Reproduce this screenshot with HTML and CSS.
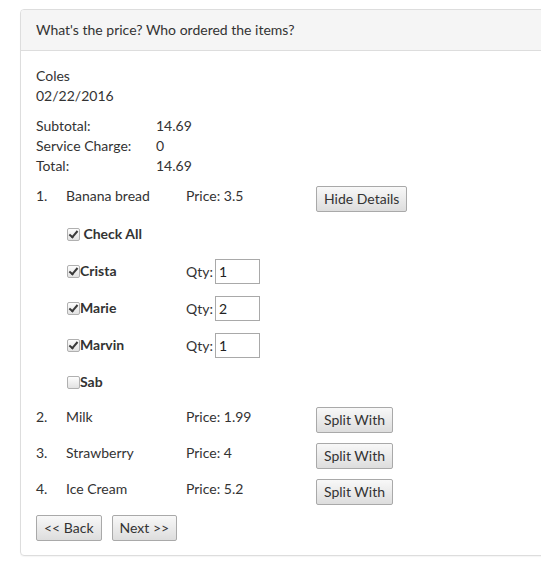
FILE: index.html
```html
<!DOCTYPE html>
<html>
<head>
<meta charset="utf-8">
<link rel="stylesheet" href="styles.css">
</head>
<body>
<div class="page">
  <div class="panel">
    <div class="panel-heading">What's the price? Who ordered the items?</div>
    <div class="panel-body">
      <div class="store">
        <div>Coles</div>
        <div>02/22/2016</div>
      </div>
      <div class="summary">
        <span>Subtotal:</span><span>14.69</span>
        <span>Service Charge:</span><span>0</span>
        <span>Total:</span><span>14.69</span>
      </div>
      <div class="items">
        <div class="item">
          <span>1.</span><span>Banana bread</span><span>Price: 3.5</span>
          <button class="btn">Hide Details</button>
        </div>
        <div class="details">
          <div class="sub"><label class="chk"><input type="checkbox" checked> Check All</label></div>
          <div class="sub"><label class="chk"><input type="checkbox" checked>Crista</label><span class="qty">Qty: <input class="qty-input" type="text" value="1"></span></div>
          <div class="sub"><label class="chk"><input type="checkbox" checked>Marie</label><span class="qty">Qty: <input class="qty-input" type="text" value="2"></span></div>
          <div class="sub"><label class="chk"><input type="checkbox" checked>Marvin</label><span class="qty">Qty: <input class="qty-input" type="text" value="1"></span></div>
          <div class="sub"><label class="chk"><input type="checkbox">Sab</label></div>
        </div>
        <div class="item">
          <span>2.</span><span>Milk</span><span>Price: 1.99</span>
          <button class="btn">Split With</button>
        </div>
        <div class="item">
          <span>3.</span><span>Strawberry</span><span>Price: 4</span>
          <button class="btn">Split With</button>
        </div>
        <div class="item">
          <span>4.</span><span>Ice Cream</span><span>Price: 5.2</span>
          <button class="btn">Split With</button>
        </div>
      </div>
      <div class="nav">
        <button class="btn">&lt;&lt; Back</button>
        <button class="btn">Next &gt;&gt;</button>
      </div>
    </div>
  </div>
</div>
</body>
</html>
```
FILE: styles.css
```css
html, body {
  margin: 0;
  padding: 0;
  background: #fff;
}
body {
  font-family: Lato, "Liberation Sans", sans-serif;
  font-size: 14px;
  line-height: 20px;
  color: #333;
}
.page {
  overflow: hidden;
  padding: 9px 0 10px 20px;
}
.panel {
  border: 1px solid #ddd;
  border-radius: 4px;
  margin-right: -30px;
  box-shadow: 0 1px 1px rgba(0,0,0,0.04);
}
.panel-heading {
  background: #f5f5f5;
  border-bottom: 1px solid #ddd;
  padding: 10px 15px;
  border-radius: 3px 3px 0 0;
}
.panel-body {
  padding: 15px 15px 14px;
}
.store {
  margin-bottom: 10px;
}
.summary {
  display: grid;
  grid-template-columns: 120px auto;
  margin-bottom: 10px;
}
.item {
  display: grid;
  grid-template-columns: 30px 120px 130px auto;
  align-items: start;
  height: 26px;
  margin-bottom: 10px;
}
.item .btn {
  justify-self: start;
}
.details {
  padding-left: 30px;
}
.sub {
  display: grid;
  grid-template-columns: 120px auto;
  align-items: start;
  height: 25px;
  margin-bottom: 12px;
}
.chk {
  display: flex;
  align-items: center;
  margin-top: 2px;
  font-weight: bold;
  white-space: pre;
}
.chk input {
  -webkit-appearance: none;
  appearance: none;
  width: 13px;
  height: 13px;
  margin: 0 0 0 1px;
  border: 1px solid #b0b0b0;
  border-radius: 2px;
  background: linear-gradient(#fdfdfd, #e2e2e2);
  position: relative;
  flex: none;
}
.chk input:checked::after {
  content: "";
  position: absolute;
  left: 3px;
  top: 0px;
  width: 3px;
  height: 7px;
  border: solid #3a3a3a;
  border-width: 0 2px 2px 0;
  transform: rotate(40deg);
}
.qty {
  display: flex;
  align-items: center;
}
.qty-input {
  box-sizing: border-box;
  width: 45px;
  height: 25px;
  margin-left: 2px;
  border: 1px solid #a9a9a9;
  padding: 1px 3px;
  font-family: Lato, "Liberation Sans", sans-serif;
  font-size: 14px;
  color: #222;
  background: #fff;
}
.btn {
  box-sizing: border-box;
  height: 26px;
  padding: 0 7px;
  border: 1px solid #a9a9a9;
  border-radius: 2px;
  background: linear-gradient(#f8f8f8, #dddddd);
  font-family: Lato, "Liberation Sans", sans-serif;
  font-size: 14px;
  color: #333;
  line-height: 20px;
}
.nav {
  display: flex;
  gap: 10px;
}
```
